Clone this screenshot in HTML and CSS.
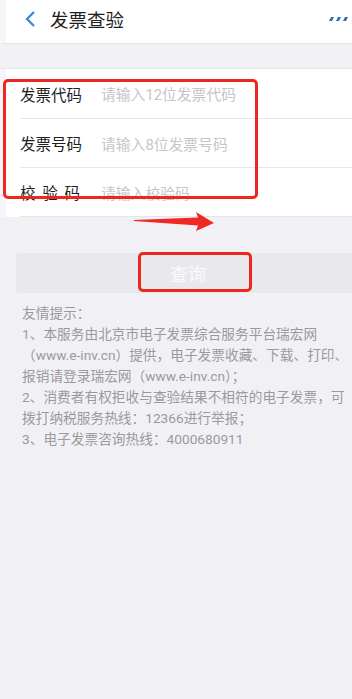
FILE: index.html
```html
<!DOCTYPE html>
<html>
  <head>
    <meta charset="utf-8" />
    <link rel="stylesheet" href="styles.css">
  </head>
  <body>
    <div class="header">
      <svg class="back-icon" width="14" height="18" viewBox="0 0 14 18">
        <polyline points="10,2 3,9 10,16" fill="none" stroke="#3a86cf" stroke-width="2.2" />
      </svg>
      <h3>发票查验</h3>
      <svg class="more-icon" width="22" height="6" viewBox="0 0 22 6">
        <polygon points="1,5 3,1 6,1 4,5" fill="#2f6fb6" />
        <polygon points="8,5 10,1 13,1 11,5" fill="#2f6fb6" />
        <polygon points="15,5 17,1 20,1 18,5" fill="#2f6fb6" />
      </svg>
    </div>

    <div class="gap"></div>

    <div class="form-section">
      <div class="form-row">
        <span class="form-label">发票代码</span>
        <span class="placeholder">请输入12位发票代码</span>
      </div>
      <div class="form-row">
        <span class="form-label">发票号码</span>
        <span class="placeholder">请输入8位发票号码</span>
      </div>
      <div class="form-row">
        <span class="form-label spaced">校验码</span>
        <span class="placeholder">请输入校验码</span>
      </div>
      <div class="mark mark-form"></div>
    </div>

    <div class="button-section">
      <svg class="arrow" width="90" height="30" viewBox="0 0 90 30">
        <polygon points="4,15 68,12.5 66,7 84,18 66,26 68,20.5 4,16" fill="#ee2822" />
      </svg>
      <button class="query-btn">查询</button>
      <div class="mark mark-button"></div>
    </div>

    <div class="tips">
      友情提示：<br />
      1、本服务由北京市电子发票综合服务平台瑞宏网<br />
      （www.e-inv.cn）提供，电子发票收藏、下载、打印、<br />
      报销请登录瑞宏网（www.e-inv.cn）；<br />
      2、消费者有权拒收与查验结果不相符的电子发票，可<br />
      拨打纳税服务热线：12366进行举报；<br />
      3、电子发票咨询热线：4000680911
    </div>
  </body>
</html>
```

FILE: styles.css
```css
body {
  width: 352px;
  height: 699px;
  margin: 0;
  overflow: hidden;
  background: #f1f1f5;
  font-family: Roboto, "Noto Sans CJK SC", sans-serif;
  color: #222222;
}
.header {
  display: flex;
  align-items: center;
  height: 43px;
  padding-left: 18px;
  background: #ffffff;
  border-left: 6px solid #f6f6f8;
  border-bottom: 1px solid #e2e2e6;
}
.back-icon {
  margin-top: -6px;
}
.header h3 {
  margin: -6px 0 0 12px;
  font-size: 18.5px;
  font-weight: normal;
  color: #1e1e1e;
  flex: 1;
}
.more-icon {
  margin: -6px 2px 0 0;
}
.gap {
  height: 24px;
  border-bottom: 1px solid #e8e8ec;
}
.form-section {
  position: relative;
  background: #ffffff;
  border-left: 6px solid #f6f6f8;
  padding-left: 14px;
}
.form-row {
  display: flex;
  align-items: center;
  height: 48px;
  border-bottom: 1px solid #e6e6e8;
}
.form-row:first-child {
  height: 49px;
}
.form-label {
  width: 81px;
  font-size: 15.5px;
  color: #1f1f1f;
}
.form-label.spaced {
  letter-spacing: 6.8px;
}
.placeholder {
  font-size: 14.8px;
  color: #c6c6c8;
}
.mark {
  position: absolute;
  border: 3px solid #ee2620;
  border-radius: 5px;
}
.mark-form {
  left: -3px;
  top: 10px;
  width: 249px;
  height: 114px;
}
.button-section {
  position: relative;
  padding: 36px 0 0 16px;
}
.arrow {
  position: absolute;
  left: 130px;
  top: -12px;
}
.query-btn {
  display: block;
  width: 344px;
  height: 40px;
  border: none;
  border-radius: 3px;
  background: #e9e9ed;
  color: #fafafc;
  font-family: Roboto, "Noto Sans CJK SC", sans-serif;
  font-size: 18px;
}
.mark-button {
  left: 138px;
  top: 35px;
  width: 108px;
  height: 34px;
}
.tips {
  padding: 10px 0 0 22px;
  font-size: 13.7px;
  line-height: 21px;
  color: #9a9a9c;
  white-space: nowrap;
}
```
